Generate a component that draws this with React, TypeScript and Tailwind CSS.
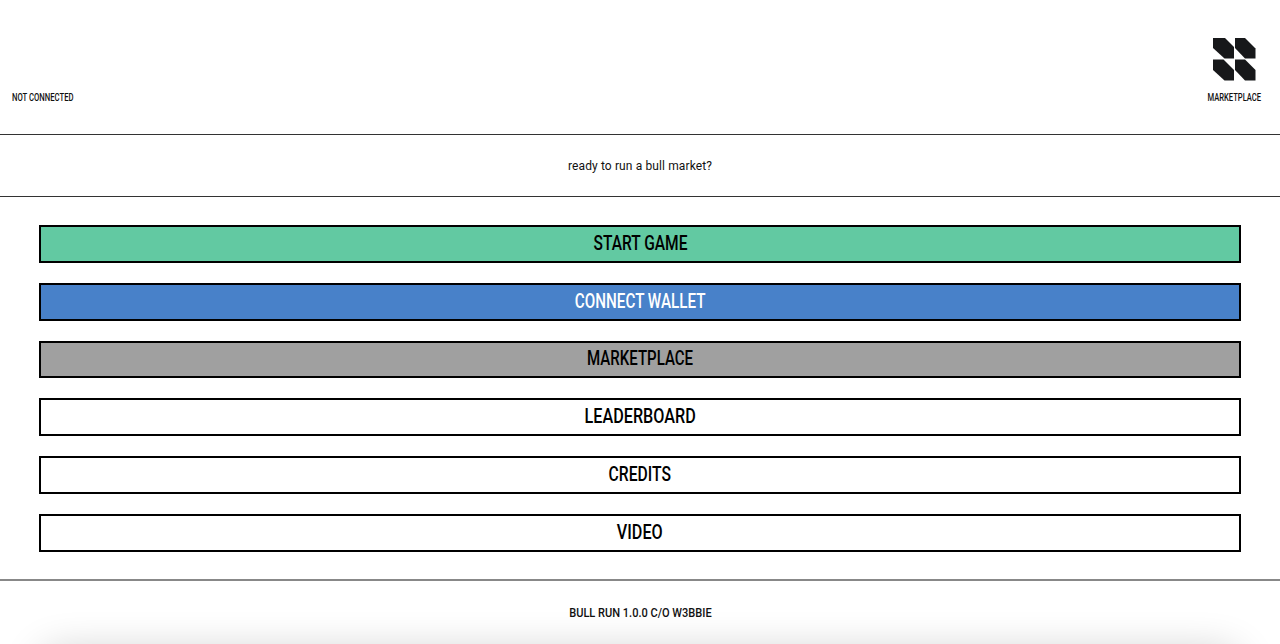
import React from 'react';

const font = "font-['Roboto',sans-serif]";

// scale per label, the original face is a bit narrower than Roboto
const buttons = [
  { label: 'START GAME', className: 'bg-[#62c9a2] text-black', labelClass: 'scale-x-[0.74]' },
  { label: 'CONNECT WALLET', className: 'bg-[#4881c9] text-white', labelClass: 'scale-x-[0.725]' },
  { label: 'MARKETPLACE', className: 'bg-[#a0a0a0] text-black', labelClass: 'scale-x-[0.716]' },
  { label: 'LEADERBOARD', className: 'bg-white text-black', labelClass: 'scale-x-[0.77]' },
  { label: 'CREDITS', className: 'bg-white text-black', labelClass: 'scale-x-[0.746]' },
  { label: 'VIDEO', className: 'bg-white text-black', labelClass: 'scale-x-[0.77]' },
];

function Logo() {
  return (
    <svg width="43" height="43" viewBox="0 0 43 43" fill="#17181a">
      <polygon points="0,0 12,0 21,9 21,20.500 11.500,20.500 0,10" />
      <polygon points="22,0 32,0 42.500,10.500 42.500,20.500 32,20.500 22,10" />
      <polygon points="0,21.500 10.500,21.500 21,32 21,42.500 11.500,42.500 0,32" />
      <polygon points="22,21.500 32,21.500 42.500,32 42.500,42.500 32,42.500 22,32" />
    </svg>
  );
}

export default function App() {
  return (
    <div className={`h-[644px] overflow-hidden bg-white text-[#111] ${font}`}>
      <header className="h-[135px] border-b border-[#333] flex justify-between items-end pl-3 pr-[19px] pb-[30px]">
        <span className="text-[10px] leading-[12px] font-medium scale-x-[0.77] origin-left">NOT CONNECTED</span>
        <div className="w-[54px] flex flex-col items-center">
          <div className="mb-[11px]">
            <Logo />
          </div>
          <span className="text-[10px] leading-[12px] font-medium -mx-2 scale-x-[0.76]">MARKETPLACE</span>
        </div>
      </header>

      <div className="h-[62px] border-b border-[#333] flex items-center justify-center text-[12px]">
        <span className="tracking-[0.12px]">ready to run a bull market?</span>
      </div>

      <main className="h-[384px] border-b-2 border-[#888] px-[39px] pt-[28px] flex flex-col gap-5">
        {buttons.map((b) => (
          <button
            key={b.label}
            className={`h-[37.8px] border-2 border-black flex items-center justify-center text-[21px] leading-[24px] font-medium ${b.className}`}
          >
            <span className={`-translate-y-px ${b.labelClass}`}>{b.label}</span>
          </button>
        ))}
      </main>

      <footer className="relative h-[63px] flex justify-center pt-[25px] text-[12px] leading-[14px]">
        <span className="font-medium scale-x-[0.92]">BULL RUN 1.0.0 C/O W3BBIE</span>
        <div className="absolute left-[40px] right-[40px] top-[70px] h-[40px] rounded-[20px] shadow-[0_0_40px_rgba(0,0,0,0.2)]" />
      </footer>
    </div>
  );
}
